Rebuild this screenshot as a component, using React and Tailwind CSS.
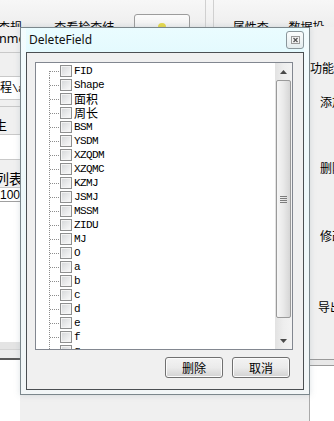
import React from "react";

const fields = [
  "FID", "Shape", "面积", "周长", "BSM", "YSDM", "XZQDM", "XZQMC", "KZMJ", "JSMJ",
  "MSSM", "ZIDU", "MJ", "O", "a", "b", "c", "d", "e", "f", "g",
];

const cjk = /[\u4e00-\u9fff]/;

const Connector = ({ first }) => (
  <svg width="11" height="14" className="shrink-0">
    <line x1="0.5" y1={first ? 7 : 0} x2="0.5" y2="14" stroke="#8c8c8c" strokeDasharray="1 1" />
    <line x1="1" y1="7.5" x2="11" y2="7.5" stroke="#8c8c8c" strokeDasharray="1 1" />
  </svg>
);

const FieldRow = ({ name, first }) => (
  <div className="flex h-[14px] shrink-0 items-center pl-[13px]">
    <Connector first={first} />
    <div className="w-[12px] h-[12px] shrink-0 border border-[#8e8f8f] bg-gradient-to-br from-[#d4d6d8] to-[#fbfbfb] shadow-[inset_0_0_0_1px_#f4f4f4]" />
    {cjk.test(name) ? (
      <span className="ml-[2px] text-[12px] leading-[14px] text-black font-['Noto_Sans_CJK_SC',sans-serif]">
        {name}
      </span>
    ) : (
      <span className="ml-[2px] text-[11px] leading-[14px] tracking-[-0.6px] text-black font-['Liberation_Mono',monospace]">
        {name}
      </span>
    )}
  </div>
);

const ScrollBar = () => (
  <div className="w-[17px] shrink-0 flex flex-col bg-gradient-to-r from-[#e2e2e2] via-[#eeeeee] to-[#f3f3f3]">
    <div className="h-[17px] flex items-center justify-center">
      <svg width="7" height="4">
        <path d="M3.5 0 L7 4 L0 4 Z" fill="#4a4a4a" />
      </svg>
    </div>
    <div className="mx-[1px] h-[238px] rounded-[2px] border border-[#9a9a9a] bg-gradient-to-r from-[#f6f6f6] via-[#e9e9e9] to-[#d6d6d6] flex items-center justify-center">
      <div className="flex flex-col gap-[1px]">
        <div className="w-[7px] h-[1px] bg-[#7c7c7c]" />
        <div className="w-[7px] h-[1px] bg-[#7c7c7c]" />
        <div className="w-[7px] h-[1px] bg-[#7c7c7c]" />
        <div className="w-[7px] h-[1px] bg-[#7c7c7c]" />
      </div>
    </div>
    <div className="flex-1" />
    <div className="h-[17px] flex items-center justify-center">
      <svg width="7" height="4">
        <path d="M0 0 L7 0 L3.5 4 Z" fill="#4a4a4a" />
      </svg>
    </div>
  </div>
);

const WinButton = ({ children }) => (
  <button className="w-[58px] h-[21px] rounded-[3px] border border-[#707070] bg-gradient-to-b from-[#f3f3f3] via-[#ebebeb] to-[#d2d2d2] text-[12px] leading-none text-black shadow-[inset_0_0_0_1px_#fbfbfb] font-['Noto_Sans_CJK_SC',sans-serif]">
    {children}
  </button>
);

const DeleteFieldDialog = () => (
  <div className="absolute left-[20px] top-[27px] w-[290px] h-[368px] border border-[#7b878c] bg-gradient-to-b from-[#f3fcfe] via-[#eef8fa] to-[#f2f6f7] flex flex-col px-[5px] pb-[4px] shadow-[0_0_6px_rgba(120,140,150,0.25)]">
    <div className="h-[24px] flex items-center justify-between bg-gradient-to-b from-[#eafcff] to-[#e4fafe]">
      <span className="pl-[3px] text-[12px] text-[#111] font-['Noto_Sans',sans-serif]">DeleteField</span>
      <button className="w-[18px] h-[18px] rounded-[3px] border border-[#8a969b] bg-gradient-to-b from-[#fbfdfd] to-[#e3ecee] flex items-center justify-center">
        <svg width="9" height="8" viewBox="0 0 9 8">
          <rect x="0.5" y="0.5" width="8" height="7" fill="#f4f4f4" stroke="#9a9a9a" />
          <path d="M2.5 2 L6.5 6 M6.5 2 L2.5 6" stroke="#555" strokeWidth="1.3" />
        </svg>
      </button>
    </div>
    <div className="flex-1 border border-[#4b4f52] bg-[#f0f0f0] flex flex-col">
      <div className="mt-[9px] ml-[8px] w-[258px] h-[288px] border border-[#828790] bg-white flex">
        <div className="flex-1 overflow-hidden flex flex-col pt-[1px]">
          {fields.map((f, i) => (
            <FieldRow key={f} name={f} first={i === 0} />
          ))}
        </div>
        <ScrollBar />
      </div>
      <div className="mt-[7px] flex justify-end gap-[9px] pr-[13px]">
        <WinButton>删除</WinButton>
        <WinButton>取消</WinButton>
      </div>
    </div>
  </div>
);

export default function App() {
  return (
    <div className="relative w-[334px] h-[421px] overflow-hidden bg-white text-[12px] text-black font-['Noto_Sans_CJK_SC',sans-serif]">
      <div className="flex flex-col h-full">
        {/* top tab strip */}
        <div className="h-[27px] shrink-0 overflow-hidden bg-gradient-to-b from-[#f7f7f7] to-[#eeeeee] flex items-start">
          <span className="mt-[21px] -ml-[2px] leading-[12px]">查规则</span>
          <span className="mt-[21px] ml-[22px] leading-[12px]">查看检查结果</span>
          <div className="mt-[14px] ml-[11px] w-[59px] h-[20px] rounded-t-[3px] border border-[#9c9c9c] bg-gradient-to-b from-[#fbfbfb] to-[#ececec] flex justify-center">
            <div className="mt-[8px] w-[8px] h-[8px] rounded-full bg-[#e6d94a]" />
          </div>
          <div className="ml-[15px] w-[1px] h-full bg-[#d0d0d0]" />
          <div className="ml-[7px] w-[1px] h-full bg-[#d0d0d0]" />
          <span className="mt-[21px] ml-[19px] leading-[12px]">属性查询</span>
          <span className="mt-[21px] ml-[10px] leading-[12px]">数据投影</span>
        </div>
        <div className="flex flex-1">
          {/* left panel */}
          <div className="w-[20px] shrink-0 overflow-hidden flex flex-col bg-[#f0f0f0]">
            <div className="h-[26px] border-b border-[#c9c9c9] flex items-center">
              <span className="-ml-[1px] text-[12.5px] font-['Noto_Sans',sans-serif] leading-none">nme</span>
            </div>
            <div className="h-[24px] border-b border-[#c9c9c9] flex items-center">
              <span className="-ml-[9px] leading-none">：</span>
            </div>
            <div className="h-[23px] border-b border-[#c9c9c9] bg-white flex items-center">
              <span className="leading-none whitespace-nowrap">程<span className="font-['Liberation_Mono',monospace] text-[11px] tracking-[-0.6px]">\as</span></span>
            </div>
            <div className="h-[7px] border-b border-[#c9c9c9]" />
            <div className="h-[28px] border-b border-[#c9c9c9] flex items-end pb-[3px]">
              <span className="-ml-[6px] text-[13px] leading-none">生</span>
            </div>
            <div className="h-[25px] border-b border-[#c9c9c9] bg-white" />
            <div className="h-[28px] border-b border-[#c9c9c9] flex items-end pb-[2px]">
              <span className="-ml-[5px] text-[14px] leading-none whitespace-nowrap">列表</span>
            </div>
            <div className="h-[14px] border-b border-[#a0a0a0] bg-white flex items-end">
              <span className="leading-none font-['Liberation_Sans',sans-serif] text-[12px]">100</span>
            </div>
            <div className="flex-1 bg-white" />
            <div className="h-[8px] border-b border-[#d4d4d4] bg-[#e4e4e4]" />
            <div className="h-[10px] border-b-2 border-[#5a5a5a] bg-[#ededed]" />
            <div className="h-[61px] bg-white" />
          </div>
          <div className="flex-1 bg-[#f0f0f0]" />
          {/* right panel */}
          <div className="w-[25px] shrink-0 overflow-hidden flex flex-col bg-[#f0f0f0] border-l border-[#a9a9a9]">
            <span className="mt-[35px] leading-none whitespace-nowrap">功能</span>
            <span className="mt-[22px] ml-[10px] leading-none whitespace-nowrap">添加</span>
            <span className="mt-[54px] ml-[10px] leading-none whitespace-nowrap">删除</span>
            <span className="mt-[56px] ml-[10px] leading-none whitespace-nowrap">修改</span>
            <span className="mt-[59px] ml-[8px] leading-none whitespace-nowrap">导出</span>
            <div className="flex-1" />
            <div className="h-[7px] border-t border-b border-[#9a9a9a] bg-[#e8e8e8]" />
            <div className="h-[55px] bg-white" />
          </div>
        </div>
      </div>
      <DeleteFieldDialog />
    </div>
  );
}
